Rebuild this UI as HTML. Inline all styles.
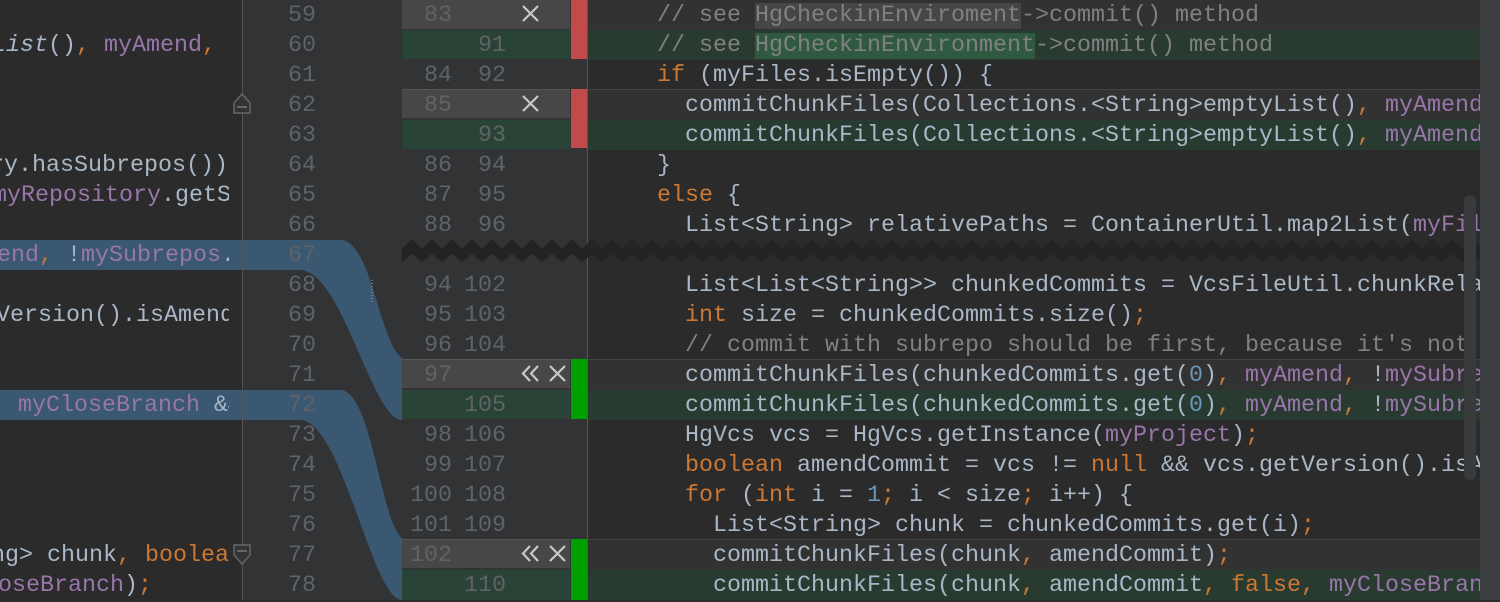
<!DOCTYPE html>
<html><head><meta charset="utf-8">
<style>
*{margin:0;padding:0;box-sizing:border-box}
body{width:1500px;height:600px;overflow:hidden;background:#2b2b2b;position:relative;font-family:"Liberation Mono","DejaVu Sans Mono",monospace;font-size:23.33px;color:#a9b7c6}
.a{position:absolute;white-space:pre;line-height:32px;height:30px}
.k{color:#cc7832}.p{color:#9876aa}.c{color:#808080}.n{color:#6897bb}.i{font-style:italic}
.ln{color:#606366;text-align:right;width:60px}
#left{position:absolute;left:0;top:0;width:242px;height:600px;overflow:hidden;background:#2b2b2b}
#lt{position:absolute;left:0;top:0;width:229px;height:600px;overflow:hidden}
#gut{position:absolute;left:242px;top:0;width:160px;height:600px;background:#313335}
#code{position:absolute;left:588px;top:0;width:892px;height:600px;overflow:hidden;background:#2b2b2b}
#strip{position:absolute;left:1480px;top:0;width:20px;height:600px;background:#3c3f41}
</style></head><body>
<div id="gut"></div>
<div id="left">
  <div class="a" style="top:240px;left:0;width:242px;background:#3b5873"></div>
  <div class="a" style="top:390px;left:0;width:242px;background:#3b5873"></div>
  <div id="lt">
  <div class="a" style="top:30px;left:-8px"><span class="i">List</span>()<span class="k">,</span> <span class="p">myAmend</span><span class="k">,</span> <span class="p">!my</span></div>
  <div class="a" style="top:150px;left:-10px">ry.hasSubrepos())</div>
  <div class="a" style="top:180px;left:-7px"><span class="p">myRepository</span>.getSubrepos</div>
  <div class="a" style="top:240px;left:-17px"><span class="p">mend</span><span class="k">,</span> !<span class="p">mySubrepos</span>.</div>
  <div class="a" style="top:300px;left:-4px">Version().isAmend</div>
  <div class="a" style="top:390px;left:18px"><span class="p">myCloseBranch</span> &amp;&amp;</div>
  <div class="a" style="top:540px;left:-65px">String&gt; chunk<span class="k">,</span> <span class="k">boolean</span></div>
  <div class="a" style="top:570px;left:-58px"><span class="p">myCloseBranch</span>)<span class="k">;</span></div>
  </div>
</div>
<svg style="position:absolute;left:0;top:0" width="1500" height="600">
  <path d="M242 240 L340 240 C372 240 378 340 402 358 L402 420 C372 420 342 270 300 270 L242 270Z" fill="#3b5873"/>
  <path d="M242 390 L340 390 C372 390 380 520 402 538 L402 600 C372 600 342 420 300 420 L242 420Z" fill="#3b5873"/>
  <line x1="242.5" y1="0" x2="242.5" y2="600" stroke="#555" stroke-width="1"/>
  <path d="M234 103 L242 94 L250 103 L250 113 L234 113Z" fill="#313335" stroke="#666" stroke-width="1.5"/>
  <line x1="237" y1="107" x2="247" y2="107" stroke="#777" stroke-width="1.5"/>
  <path d="M234 545 L250 545 L250 555 L242 564 L234 555Z" fill="#313335" stroke="#666" stroke-width="1.5"/>
  <line x1="237" y1="551" x2="247" y2="551" stroke="#777" stroke-width="1.5"/>
  <line x1="372" y1="280" x2="372" y2="302" stroke="#aaa" stroke-dasharray="1 2"/>
</svg>
<div style="position:absolute;left:256px;top:0">
<div class="a ln" style="top:0">59</div><div class="a ln" style="top:30px">60</div><div class="a ln" style="top:60px">61</div><div class="a ln" style="top:90px">62</div><div class="a ln" style="top:120px">63</div><div class="a ln" style="top:150px">64</div><div class="a ln" style="top:180px">65</div><div class="a ln" style="top:210px">66</div><div class="a ln" style="top:240px">67</div><div class="a ln" style="top:270px">68</div><div class="a ln" style="top:300px">69</div><div class="a ln" style="top:330px">70</div><div class="a ln" style="top:360px">71</div><div class="a ln" style="top:390px">72</div><div class="a ln" style="top:420px">73</div><div class="a ln" style="top:450px">74</div><div class="a ln" style="top:480px">75</div><div class="a ln" style="top:510px">76</div><div class="a ln" style="top:540px">77</div><div class="a ln" style="top:570px">78</div>
</div>
<div style="position:absolute;left:402px;top:0;width:186px;height:600px;background:#313335"></div>
<div style="position:absolute;left:402px;top:0;width:168px;height:29px;background:#474747"></div>
<div style="position:absolute;left:402px;top:30px;width:168px;height:29px;background:#294436"></div>
<div style="position:absolute;left:402px;top:89px;width:168px;height:29px;background:#474747;border-top:1px solid #555"></div>
<div style="position:absolute;left:402px;top:120px;width:168px;height:29px;background:#294436"></div>
<div style="position:absolute;left:402px;top:359px;width:168px;height:29px;background:#474747;border-top:1px solid #555"></div>
<div style="position:absolute;left:402px;top:390px;width:168px;height:29px;background:#294436"></div>
<div style="position:absolute;left:402px;top:539px;width:168px;height:29px;background:#474747;border-top:1px solid #555"></div>
<div style="position:absolute;left:402px;top:570px;width:168px;height:30px;background:#294436"></div>
<div style="position:absolute;left:571px;top:0;width:16px;height:59px;background:#c24a4a"></div>
<div style="position:absolute;left:571px;top:89px;width:16px;height:59px;background:#c24a4a"></div>
<div style="position:absolute;left:571px;top:359px;width:16px;height:60px;background:#00a000"></div>
<div style="position:absolute;left:571px;top:539px;width:16px;height:61px;background:#00a000"></div>
<div style="position:absolute;left:587px;top:0;width:1px;height:600px;background:#555"></div>
<div style="position:absolute;left:392px;top:0">
<div class="a ln" style="top:0">83</div>
<div class="a ln" style="top:60px">84</div>
<div class="a ln" style="top:90px">85</div>
<div class="a ln" style="top:150px">86</div><div class="a ln" style="top:180px">87</div><div class="a ln" style="top:210px">88</div>
<div class="a ln" style="top:270px">94</div><div class="a ln" style="top:300px">95</div><div class="a ln" style="top:330px">96</div><div class="a ln" style="top:360px">97</div>
<div class="a ln" style="top:420px">98</div><div class="a ln" style="top:450px">99</div><div class="a ln" style="top:480px">100</div><div class="a ln" style="top:510px">101</div><div class="a ln" style="top:540px">102</div>
</div>
<div style="position:absolute;left:446px;top:0">
<div class="a ln" style="top:30px">91</div><div class="a ln" style="top:60px">92</div><div class="a ln" style="top:120px">93</div><div class="a ln" style="top:150px">94</div><div class="a ln" style="top:180px">95</div><div class="a ln" style="top:210px">96</div>
<div class="a ln" style="top:270px">102</div><div class="a ln" style="top:300px">103</div><div class="a ln" style="top:330px">104</div><div class="a ln" style="top:390px">105</div>
<div class="a ln" style="top:420px">106</div><div class="a ln" style="top:450px">107</div><div class="a ln" style="top:480px">108</div><div class="a ln" style="top:510px">109</div><div class="a ln" style="top:570px">110</div>
</div>
<svg style="position:absolute;left:0;top:0" width="1500" height="600" fill="none" stroke="#c8c8c8" stroke-width="2.2">
  <path d="M523 6 L538 21 M538 6 L523 21"/>
  <path d="M523 96 L538 111 M538 96 L523 111"/>
  <path d="M550 366 L565 381 M565 366 L550 381"/>
  <path d="M550 546 L565 561 M565 546 L550 561"/>
  <path d="M530 366 L523 373.5 L530 381 M538 366 L531 373.5 L538 381"/>
  <path d="M530 546 L523 553.5 L530 561 M538 546 L531 553.5 L538 561"/>
</svg>
<svg style="position:absolute;left:402px;top:236px" width="1078" height="30">
  <defs><pattern id="zz" width="20" height="30" patternUnits="userSpaceOnUse">
    <path d="M0 13 L10 3 L20 13 L20 26 L10 18 L0 26Z" fill="#232323"/>
  </pattern></defs>
  <rect width="1078" height="30" fill="url(#zz)"/>
</svg>
<div id="code" style="background:transparent">
  <div class="a" style="top:0;left:0;width:892px;background:#323232"></div>
  <div class="a" style="top:30px;left:0;width:892px;background:#293b30"></div>
  <div class="a" style="top:89px;left:0;width:892px;height:31px;background:#323232;border-top:1px solid #444"></div>
  <div class="a" style="top:120px;left:0;width:892px;background:#293b30"></div>
  <div class="a" style="top:359px;left:0;width:892px;height:31px;background:#323232;border-top:1px solid #444"></div>
  <div class="a" style="top:390px;left:0;width:892px;background:#293b30"></div>
  <div class="a" style="top:539px;left:0;width:892px;height:31px;background:#323232;border-top:1px solid #444"></div>
  <div class="a" style="top:570px;left:0;width:892px;background:#293b30"></div>
  <div class="a c" style="top:0;left:69px">// see <span style="background:#464646">HgCheckinEnviroment</span>-&gt;commit() method</div>
  <div class="a c" style="top:30px;left:69px">// see <span style="background:#2f5a3f">HgCheckinEnvironment</span>-&gt;commit() method</div>
  <div class="a" style="top:60px;left:69px"><span class="k">if</span> (myFiles.isEmpty()) {</div>
  <div class="a" style="top:90px;left:97px">commitChunkFiles(Collections.&lt;String&gt;emptyList()<span class="k">,</span> <span class="p">myAmend</span><span class="k">,</span></div>
  <div class="a" style="top:120px;left:97px">commitChunkFiles(Collections.&lt;String&gt;emptyList()<span class="k">,</span> <span class="p">myAmend</span><span class="k">,</span></div>
  <div class="a" style="top:150px;left:69px">}</div>
  <div class="a" style="top:180px;left:69px"><span class="k">else</span> {</div>
  <div class="a" style="top:210px;left:97px">List&lt;String&gt; relativePaths = ContainerUtil.map2List(<span class="p">myFiles</span></div>
  <div class="a" style="top:270px;left:97px">List&lt;List&lt;String&gt;&gt; chunkedCommits = VcsFileUtil.chunkRelativePaths</div>
  <div class="a" style="top:300px;left:97px"><span class="k">int</span> size = chunkedCommits.size()<span class="k">;</span></div>
  <div class="a c" style="top:330px;left:97px">// commit with subrepo should be first, because it's not</div>
  <div class="a" style="top:360px;left:97px">commitChunkFiles(chunkedCommits.get(<span class="n">0</span>)<span class="k">,</span> <span class="p">myAmend</span><span class="k">,</span> !<span class="p">mySubrepos</span></div>
  <div class="a" style="top:390px;left:97px">commitChunkFiles(chunkedCommits.get(<span class="n">0</span>)<span class="k">,</span> <span class="p">myAmend</span><span class="k">,</span> !<span class="p">mySubrepos</span></div>
  <div class="a" style="top:420px;left:97px">HgVcs vcs = HgVcs.getInstance(<span class="p">myProject</span>)<span class="k">;</span></div>
  <div class="a" style="top:450px;left:97px"><span class="k">boolean</span> amendCommit = vcs != <span class="k">null</span> &amp;&amp; vcs.getVersion().isAmend</div>
  <div class="a" style="top:480px;left:97px"><span class="k">for</span> (<span class="k">int</span> i = <span class="n">1</span><span class="k">;</span> i &lt; size<span class="k">;</span> i++) {</div>
  <div class="a" style="top:510px;left:125px">List&lt;String&gt; chunk = chunkedCommits.get(i)<span class="k">;</span></div>
  <div class="a" style="top:540px;left:125px">commitChunkFiles(chunk<span class="k">,</span> amendCommit)<span class="k">;</span></div>
  <div class="a" style="top:570px;left:125px">commitChunkFiles(chunk<span class="k">,</span> amendCommit<span class="k">,</span> <span class="k">false</span><span class="k">,</span> <span class="p">myCloseBranch</span></div>
  <div style="position:absolute;left:876px;top:195px;width:12px;height:285px;border-radius:6px;background:#383a3c"></div>
</div>
<div id="strip"></div>
</body></html>
